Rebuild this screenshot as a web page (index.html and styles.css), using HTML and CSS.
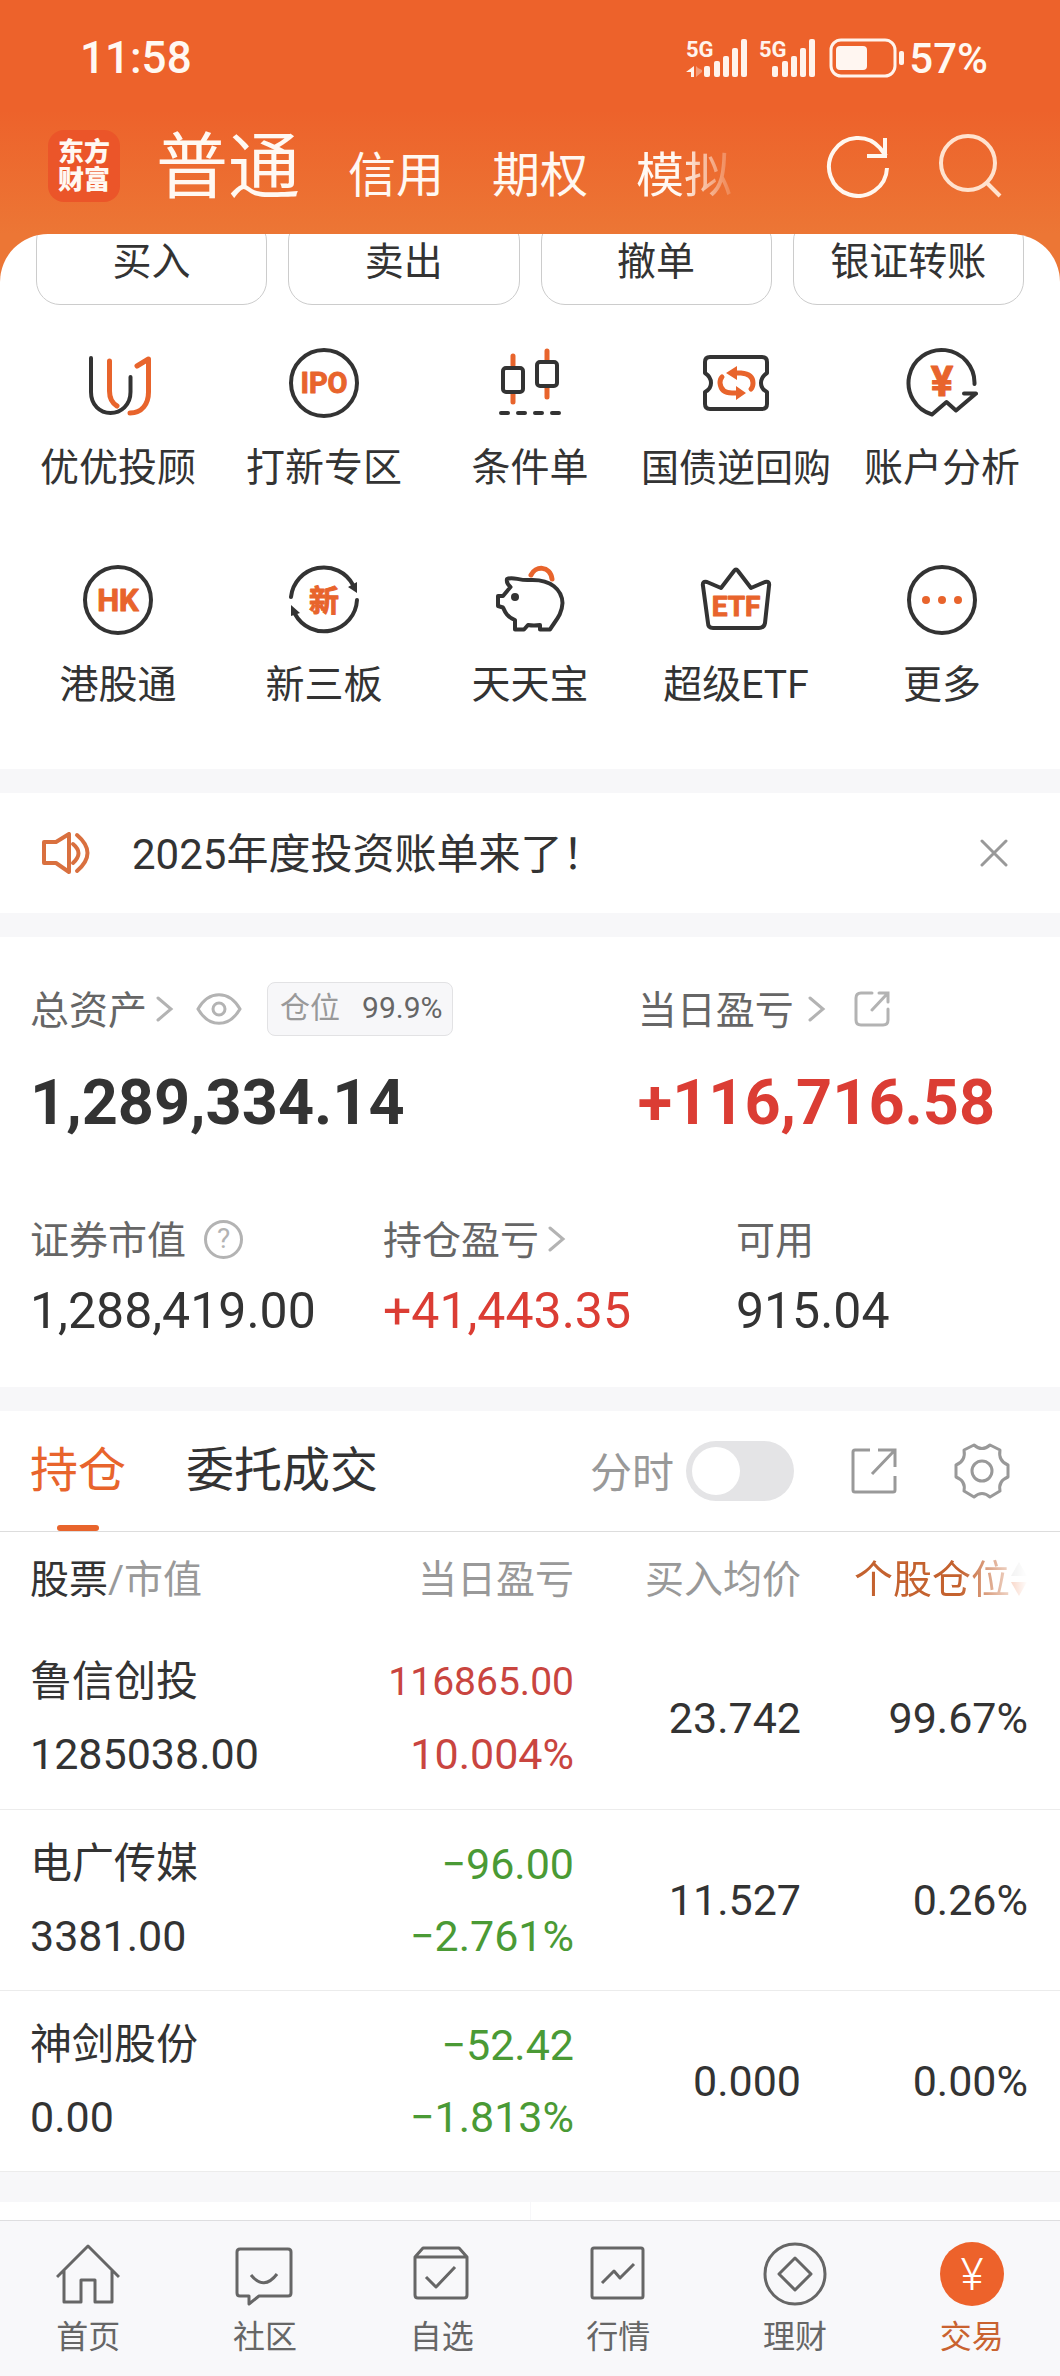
FILE: index.html
```html
<!DOCTYPE html>
<html lang="zh-CN">
<head>
    <meta charset="UTF-8">
    <meta name="viewport" content="width=device-width, initial-scale=1.0">
    <title>交易</title>
    <link rel="stylesheet" href="styles.css">
</head>
<body>
    <!-- 顶部 -->
    <header class="header">
        <div class="status">
            <span class="time">11:58</span>
            <div class="status-right">
                <svg class="signal" viewBox="0 0 64 40">
                    <text x="0" y="19" class="net">5G</text>
                    <g fill="#fff3ec">
                        <path d="M8 28v11H5v-5H0z"/>
                        <path d="M10 28v11l6-5v-2l-4-2z" opacity=".4"/>
                        <rect x="18" y="28" width="6" height="11" rx="2"/>
                        <rect x="28" y="23" width="6" height="16" rx="2"/>
                        <rect x="37" y="18" width="6" height="21" rx="2"/>
                        <rect x="46" y="10" width="6" height="29" rx="2"/>
                        <rect x="55" y="1" width="6" height="38" rx="2"/>
                    </g>
                </svg>
                <svg class="signal second" viewBox="0 0 64 40">
                    <text x="0" y="19" class="net">5G</text>
                    <g fill="#fff3ec">
                        <rect x="13" y="28" width="6" height="11" rx="2"/>
                        <rect x="23" y="23" width="6" height="16" rx="2"/>
                        <rect x="32" y="18" width="6" height="21" rx="2"/>
                        <rect x="41" y="10" width="6" height="29" rx="2"/>
                        <rect x="50" y="1" width="6" height="38" rx="2"/>
                    </g>
                </svg>
                <svg class="battery" viewBox="0 0 76 40">
                    <rect x="2" y="2" width="64" height="36" rx="10" fill="none" stroke="#fff3ec" stroke-width="3"/>
                    <rect x="7" y="8" width="31" height="24" rx="4" fill="#fff6f1"/>
                    <rect x="70" y="13" width="5" height="14" rx="2" fill="#fff3ec"/>
                </svg>
                <span class="percent">57%</span>
            </div>
        </div>
        <div class="topbar">
            <a class="logo" href="#">东方<br>财富</a>
            <nav class="account">
                <a class="current" href="#">普通</a>
                <a href="#">信用</a>
                <a href="#">期权</a>
                <a class="fade" href="#">模拟</a>
            </nav>
            <div class="actions">
                <button type="button" aria-label="刷新">
                    <svg viewBox="0 0 64 64" fill="none" stroke="#fff7ef" stroke-width="4">
                        <path d="M61 34A29 29 0 1 1 54 14L60 22"/>
                        <path d="M59 4v18H41"/>
                    </svg>
                </button>
                <button type="button" aria-label="搜索">
                    <svg viewBox="0 0 64 64" fill="none" stroke="#ffe2ce" stroke-width="4">
                        <circle cx="30" cy="29" r="27"/>
                        <path d="M48 48l14 14"/>
                    </svg>
                </button>
            </div>
        </div>
    </header>

    <main>
        <!-- 快捷入口 -->
        <section class="sheet">
            <div class="trade">
                <button type="button">买入</button>
                <button type="button">卖出</button>
                <button type="button">撤单</button>
                <button type="button">银证转账</button>
            </div>
            <div class="features">
                <a href="#">
                    <svg class="icon" viewBox="0 0 72 72">
                        <path d="M9 11V45C9 58 18 66 28.500 66S48.500 58 48.500 45V30"/>
                        <path class="hot" d="M27.500 14V44C27.500 51 30 56 35 59M48 66C60 66 66.500 57 66.500 45V12L55 19"/>
                    </svg>
                    <span>优优投顾</span>
                </a>
                <a href="#">
                    <svg class="icon" viewBox="0 0 72 72">
                        <circle cx="36" cy="36" r="33"/>
                        <text x="36" y="46" font-size="29">IPO</text>
                    </svg>
                    <span>打新专区</span>
                </a>
                <a href="#">
                    <svg class="icon" viewBox="0 0 72 72">
                        <path class="hot" d="M19 9v9M19 46v9M53 4v9M53 41v9"/>
                        <rect x="9" y="21" width="20" height="24" rx="3"/>
                        <rect x="43" y="15" width="20" height="24" rx="3"/>
                        <path d="M7 66h7M24 66h7M41 66h7M58 66h7"/>
                    </svg>
                    <span>条件单</span>
                </a>
                <a href="#">
                    <svg class="icon" viewBox="0 0 72 72">
                        <path d="M5 26V15Q5 10 10 10H62Q67 10 67 15V26Q61 30 61 36T67 45V57Q67 62 62 62H10Q5 62 5 57V45Q11 42 11 36T5 26Z"/>
                        <path class="hot" d="M35 26H41Q53 27 53 36Q53 40 51 42M22 30Q20 32 20 36Q21 46 32 46H37"/>
                        <path class="fill" d="M26 26l11-7v14zM46 46l-10-7v14z"/>
                    </svg>
                    <span class="long">国债逆回购</span>
                </a>
                <a href="#">
                    <svg class="icon" viewBox="0 0 72 72">
                        <path d="M68.500 37A33 33 0 1 0 26 67.500L40.500 55L50 63.500L70 46.500H58"/>
                        <text x="36" y="49" font-size="42">¥</text>
                    </svg>
                    <span>账户分析</span>
                </a>
                <a href="#">
                    <svg class="icon" viewBox="0 0 72 72">
                        <circle cx="36" cy="36" r="33"/>
                        <text x="36" y="47" font-size="31">HK</text>
                    </svg>
                    <span>港股通</span>
                </a>
                <a href="#">
                    <svg class="icon" viewBox="0 0 72 72">
                        <path d="M3 33A33 33 0 0 1 65 21M69 36A33 33 0 0 1 7 50"/>
                        <path class="dark" d="M69 18v11l-9-6zM3 41l9 8-9 3z"/>
                        <text x="36" y="47" font-size="30">新</text>
                    </svg>
                    <span>新三板</span>
                </a>
                <a href="#">
                    <svg class="icon" viewBox="0 0 72 72">
                        <path class="hot" d="M37 11C41 2 56 1 58 15"/>
                        <path d="M13 15C19 12 25 17 36 16C57 15 68 26 68.500 39C68 51 61 57 56 65.500H46V61Q40 62 34 61L30 65.500H21V56C13 53 11 48 9 43.500L4 42V32H9L16.500 23Q12 19 13 15Z"/>
                        <circle class="dark" cx="21" cy="33" r="4"/>
                    </svg>
                    <span>天天宝</span>
                </a>
                <a href="#">
                    <svg class="icon" viewBox="0 0 72 72">
                        <path d="M3 22Q2 17 7 18L21 24L34 7Q36 4 38 7L51 24L65 18Q70 17 69 22L65 59Q64 64 59 64H13Q8 64 8 59Z"/>
                        <text x="36" y="52" font-size="28">ETF</text>
                    </svg>
                    <span>超级ETF</span>
                </a>
                <a href="#">
                    <svg class="icon" viewBox="0 0 72 72">
                        <circle cx="36" cy="36" r="33"/>
                        <circle class="fill" cx="20" cy="36" r="4"/>
                        <circle class="fill" cx="36" cy="36" r="4"/>
                        <circle class="fill" cx="52" cy="36" r="4"/>
                    </svg>
                    <span>更多</span>
                </a>
            </div>
        </section>

        <!-- 公告 -->
        <section class="notice">
            <svg class="speaker" viewBox="0 0 48 42" fill="none" stroke="#d9703f" stroke-width="4" stroke-linejoin="round" stroke-linecap="round">
                <path d="M2 10h12l13-8v38l-13-9H2z"/>
                <path d="M31 12q11 9 0 19M35 3q21 18 0 36"/>
            </svg>
            <a href="#">2025年度投资账单来了！</a>
            <button type="button" aria-label="关闭">
                <svg viewBox="0 0 28 28" stroke="#999" stroke-width="3" stroke-linecap="round">
                    <path d="M2 2l24 24M26 2L2 26"/>
                </svg>
            </button>
        </section>

        <!-- 资产 -->
        <section class="assets">
            <div class="total">
                <div>
                    <div class="label">
                        <a href="#">总资产</a>
                        <svg class="arrow" viewBox="0 0 18 26"><path d="M2 2l13 11L2 24"/></svg>
                        <button class="eye" type="button" aria-label="隐藏金额">
                            <svg viewBox="0 0 46 32" fill="none" stroke="#b3b3b3" stroke-width="3">
                                <path d="M2 16C13-3 33-3 44 16C33 35 13 35 2 16Z"/>
                                <circle cx="23" cy="16" r="6"/>
                            </svg>
                        </button>
                        <span class="badge">仓位<b>99.9%</b></span>
                    </div>
                    <div class="money">1,289,334.14</div>
                </div>
                <div>
                    <div class="label">
                        <a href="#">当日盈亏</a>
                        <svg class="arrow day" viewBox="0 0 18 26"><path d="M2 2l13 11L2 24"/></svg>
                        <button class="share" type="button" aria-label="分享盈亏">
                            <svg viewBox="0 0 36 36" fill="none" stroke="#b3b3b3" stroke-width="3" stroke-linecap="round">
                                <path d="M18 2H7Q2 2 2 7V29Q2 34 7 34H29Q34 34 34 29V18M25 2H34V11M33 3L18 19"/>
                            </svg>
                        </button>
                    </div>
                    <div class="money up">+116,716.58</div>
                </div>
            </div>
            <div class="detail">
                <div>
                    <div class="label">
                        <span>证券市值</span>
                        <button class="help" type="button" aria-label="说明">?</button>
                    </div>
                    <div class="num">1,288,419.00</div>
                </div>
                <div>
                    <div class="label">
                        <a href="#">持仓盈亏</a>
                        <svg class="arrow" viewBox="0 0 18 26"><path d="M2 2l13 11L2 24"/></svg>
                    </div>
                    <div class="num up">+41,443.35</div>
                </div>
                <div>
                    <div class="label"><span>可用</span></div>
                    <div class="num">915.04</div>
                </div>
            </div>
        </section>

        <!-- 持仓 -->
        <section class="position">
            <div class="tabs">
                <a class="current" href="#">持仓</a>
                <a href="#">委托成交</a>
                <label class="switch"><span>分时</span><input type="checkbox"></label>
                <button type="button" aria-label="分享持仓">
                    <svg viewBox="0 0 48 48" fill="none" stroke="#999" stroke-width="3">
                        <path d="M20 3H5Q3 3 3 5V43Q3 45 5 45H43Q45 45 45 43V29M28 3H45V20M44 4L22 27"/>
                    </svg>
                </button>
                <button type="button" aria-label="设置">
                    <svg viewBox="0 0 56 56" fill="none" stroke="#999" stroke-width="3" stroke-linejoin="round">
                        <path d="M20 2Q28 9 36 2L46 7Q44 18 54 22V34Q44 38 46 48L36 54Q28 47 20 54L10 48Q12 38 2 34V22Q12 18 10 7Z"/>
                        <circle cx="28" cy="28" r="10"/>
                    </svg>
                </button>
            </div>
            <table>
                <thead>
                    <tr>
                        <th><em>股票</em>/市值</th>
                        <th>当日盈亏</th>
                        <th>买入均价</th>
                        <th class="sort">
                            <span>个股仓位<svg viewBox="0 0 18 36"><path d="M9 0l8 14H1z" fill="#ccc"/><path d="M9 34l8-14H1z" fill="#e8642c"/></svg></span>
                        </th>
                    </tr>
                </thead>
                <tbody>
                    <tr>
                        <td><span class="name">鲁信创投</span><span>1285038.00</span></td>
                        <td class="red"><span class="small">116865.00</span><span>10.004%</span></td>
                        <td>23.742</td>
                        <td>99.67%</td>
                    </tr>
                    <tr>
                        <td><span class="name">电广传媒</span><span>3381.00</span></td>
                        <td class="green"><span>−96.00</span><span>−2.761%</span></td>
                        <td>11.527</td>
                        <td>0.26%</td>
                    </tr>
                    <tr>
                        <td><span class="name">神剑股份</span><span>0.00</span></td>
                        <td class="green"><span>−52.42</span><span>−1.813%</span></td>
                        <td>0.000</td>
                        <td>0.00%</td>
                    </tr>
                </tbody>
            </table>
        </section>
        <div class="next"><div></div><div></div></div>
    </main>

    <!-- 底部导航 -->
    <nav class="tabbar">
        <a href="#">
            <svg viewBox="0 0 64 64"><path d="M1 35L32 4L63 35M8 28V60H25V38H39V60H56V28"/></svg>
            首页
        </a>
        <a href="#">
            <svg viewBox="0 0 64 64"><path d="M7 7H55Q58 7 58 10V51Q58 54 55 54H26L16 62V54H7Q4 54 4 51V10Q4 7 7 7ZM18 33Q31 49 44 32"/></svg>
            社区
        </a>
        <a href="#">
            <svg viewBox="0 0 64 64"><path d="M5 15L13 6H49L57 15V53Q57 56 54 56H8Q5 56 5 53ZM5 15H57M16 35L26 45L45 25"/></svg>
            自选
        </a>
        <a href="#">
            <svg viewBox="0 0 64 64"><rect x="6" y="6" width="51" height="50" rx="2"/><path d="M16 41L28 29L34 36L48 22"/></svg>
            行情
        </a>
        <a href="#">
            <svg viewBox="0 0 64 64"><circle cx="32" cy="32" r="30"/><path d="M32 16L48 32L32 48L16 32Z"/></svg>
            理财
        </a>
        <a class="current" href="#">
            <svg viewBox="0 0 64 64"><circle cx="32" cy="32" r="32"/><text x="32" y="48">¥</text></svg>
            交易
        </a>
    </nav>
</body>
</html>
```
FILE: styles.css
```css
* {
    margin: 0;
    padding: 0;
    box-sizing: border-box;
}
body {
    min-height: 100vh;
    display: flex;
    flex-direction: column;
    background-color: #f7f7f9;
    color: #333;
    font-family: Roboto, "Noto Sans CJK SC", sans-serif;
    font-size: 39px;
}
a {
    color: inherit;
    text-decoration: none;
}
button {
    border: none;
    background: none;
    color: inherit;
    font: inherit;
    cursor: pointer;
}
svg {
    display: block;
    flex-shrink: 0;
}
main {
    flex: 1;
    display: flex;
    flex-direction: column;
    gap: 24px;
}

/* 顶部 */
.header {
    height: 284px;
    margin-bottom: -50px;
    background: linear-gradient(#ed622b 110px, #ec7635 234px);
    color: #fff8f2;
}
.status {
    display: flex;
    justify-content: space-between;
    align-items: center;
    height: 116px;
    padding: 0 72px 0 80px;
    font-size: 44px;
    font-weight: 500;
}
.status-right {
    display: flex;
    align-items: center;
}
.signal {
    width: 64px;
    height: 40px;
    margin-right: 9px;
}
.signal.second {
    margin-right: 6px;
}
.net {
    fill: #fff3ec;
    font-size: 22px;
    font-weight: 700;
}
.battery {
    width: 76px;
    height: 40px;
    margin-right: 4px;
}
.percent {
    font-size: 42px;
}
.topbar {
    display: flex;
    align-items: center;
    height: 100px;
    padding: 0 58px 0 48px;
}
.logo {
    width: 72px;
    height: 72px;
    padding: 8px 0;
    border-radius: 16px;
    background-color: #eb5529;
    font-size: 26px;
    font-weight: 900;
    line-height: 28px;
    text-align: center;
}
.account {
    display: flex;
    align-items: baseline;
    gap: 48px;
    margin-left: 36px;
    padding-top: 12px;
    font-size: 48px;
    line-height: 72px;
}
.account .current {
    font-size: 72px;
}
.account .fade {
    -webkit-mask-image: linear-gradient(to right, #000 45%, transparent 110%);
    mask-image: linear-gradient(to right, #000 45%, transparent 110%);
}
.actions {
    display: flex;
    gap: 48px;
    margin-left: auto;
}
.actions svg {
    width: 64px;
    height: 64px;
}

/* 快捷入口 */
.sheet {
    overflow: hidden;
    border-radius: 48px 48px 0 0;
    background-color: #fff;
}
.trade {
    display: grid;
    grid-template-columns: repeat(4, 1fr);
    gap: 21px;
    margin-top: -17px;
    padding: 0 36px;
}
.trade button {
    height: 88px;
    padding-bottom: 6px;
    border: 1px solid #ccc;
    border-radius: 24px;
}
.features {
    display: grid;
    grid-template-columns: repeat(5, 1fr);
    row-gap: 68px;
    padding: 42px 15px 56px;
}
.features a {
    display: flex;
    flex-direction: column;
    align-items: center;
    gap: 21px;
    line-height: 56px;
    white-space: nowrap;
}
.features .long {
    font-size: 38px;
}
.icon {
    width: 72px;
    height: 72px;
    fill: none;
    stroke: #333;
    stroke-width: 4;
    stroke-linecap: round;
    stroke-linejoin: round;
}
.icon .hot {
    stroke: #e8642c;
    stroke-width: 5;
}
.icon .fill {
    fill: #e8642c;
    stroke: none;
}
.icon .dark {
    fill: #333;
    stroke: none;
}
.icon text {
    fill: #e8642c;
    stroke: #e8642c;
    stroke-width: 1;
    font-weight: 700;
    text-anchor: middle;
}

/* 公告 */
.notice {
    display: flex;
    align-items: center;
    height: 120px;
    padding: 0 52px 0 42px;
    background-color: #fff;
    font-size: 42px;
}
.notice a {
    flex: 1;
    margin-left: 42px;
    padding-bottom: 6px;
}
.speaker {
    width: 48px;
    height: 42px;
}
.notice button svg {
    width: 28px;
    height: 28px;
}

/* 资产 */
.assets {
    padding: 44px 30px 48px;
    background-color: #fff;
}
.total {
    display: grid;
    grid-template-columns: 31fr 20fr;
    margin-bottom: 72px;
}
.detail {
    display: grid;
    grid-template-columns: 6fr 6fr 5fr;
}
.label {
    display: flex;
    align-items: center;
    height: 56px;
    color: #666;
}
.label > a,
.label > span {
    padding-bottom: 4px;
}
.arrow {
    width: 18px;
    height: 26px;
    margin-left: 9px;
    fill: none;
    stroke: #b3b3b3;
    stroke-width: 3;
    stroke-linecap: round;
}
.arrow.day {
    margin-left: 14px;
}
.eye {
    width: 46px;
    margin: 0 25px 0 22px;
}
.share {
    width: 36px;
    margin-left: 28px;
}
.help {
    width: 39px;
    height: 39px;
    margin-left: 18px;
    border: 3px solid #b3b3b3;
    border-radius: 50%;
    color: #b3b3b3;
    font-size: 28px;
    line-height: 32px;
}
.label .badge {
    height: 54px;
    padding: 0 10px 0 12px;
    border: 1px solid #e2e2e4;
    border-radius: 8px;
    background-color: #f7f7f9;
    color: #999;
    font-size: 30px;
    line-height: 50px;
}
.badge b {
    margin-left: 22px;
    color: #666;
    font-weight: 400;
}
.money {
    margin-top: 30px;
    font-size: 63px;
    font-weight: 700;
    line-height: 72px;
}
.num {
    margin-top: 16px;
    font-size: 50px;
    line-height: 56px;
}
.up {
    color: #db3d34;
}

/* 持仓 */
.position {
    background-color: #fff;
}
.tabs {
    display: flex;
    align-items: center;
    height: 121px;
    padding: 0 50px 0 30px;
    border-bottom: 1px solid #ddd;
    font-size: 48px;
}
.tabs a {
    position: relative;
    margin-right: 60px;
    line-height: 120px;
}
.tabs .current {
    color: #e8642c;
}
.tabs .current::after {
    content: "";
    position: absolute;
    left: 50%;
    bottom: 0;
    width: 42px;
    height: 6px;
    margin-left: -21px;
    border-radius: 3px;
    background-color: #e8642c;
}
.switch {
    display: flex;
    align-items: center;
    gap: 12px;
    margin-left: auto;
    color: #999;
    font-size: 42px;
}
.switch span {
    padding-bottom: 4px;
}
.switch input {
    appearance: none;
    width: 108px;
    height: 60px;
    padding: 6px;
    border-radius: 30px;
    background-color: #e4e4e6;
}
.switch input::before {
    content: "";
    display: block;
    width: 48px;
    height: 48px;
    border-radius: 50%;
    background-color: #fff;
}
.switch input:checked {
    background-color: #e8642c;
}
.switch input:checked::before {
    margin-left: auto;
}
.tabs button {
    width: 56px;
    margin-left: 56px;
}
.tabs .switch + button {
    width: 48px;
}
table {
    width: 100%;
    table-layout: fixed;
    border-collapse: collapse;
    font-size: 43px;
    line-height: 72px;
}
th {
    width: 227px;
    height: 96px;
    color: #999;
    font-size: 39px;
    font-weight: 400;
    text-align: right;
}
th:first-child {
    width: auto;
}
th em {
    color: #333;
    font-style: normal;
}
td {
    height: 181px;
    border-bottom: 1px solid #ececec;
    text-align: right;
}
th:first-child,
td:first-child {
    padding-left: 30px;
    text-align: left;
}
th:last-child,
td:last-child {
    width: 259px;
    padding-right: 32px;
}
td span {
    display: block;
}
td .name {
    font-size: 42px;
}
td .small {
    font-size: 39px;
}
.red {
    color: #c9453f;
}
.green {
    color: #4a9a35;
}
.sort span {
    display: flex;
    justify-content: flex-end;
    align-items: center;
    color: #c4622f;
    -webkit-mask-image: linear-gradient(to right, #000 70%, transparent);
    mask-image: linear-gradient(to right, #000 70%, transparent);
}
.sort svg {
    width: 18px;
    height: 36px;
}
.next {
    display: flex;
    gap: 1px;
    margin-top: 6px;
}
.next div {
    flex: 1;
    height: 18px;
    background-color: #fff;
}

/* 底部导航 */
.tabbar {
    position: sticky;
    bottom: 0;
    display: grid;
    grid-template-columns: repeat(6, 1fr);
    padding: 21px 0 20px;
    border-top: 1px solid #dedee0;
    background-color: #f8f8fa;
    color: #666;
    font-size: 32px;
    line-height: 40px;
}
.tabbar a {
    display: flex;
    flex-direction: column;
    align-items: center;
    gap: 11px;
}
.tabbar svg {
    width: 64px;
    height: 64px;
    fill: none;
    stroke: #666;
    stroke-width: 3;
    stroke-linejoin: round;
}
.tabbar .current {
    color: #c9622f;
}
.tabbar .current svg {
    fill: #ed622b;
    stroke: none;
}
.tabbar text {
    fill: #fff;
    font-size: 44px;
    font-weight: 300;
    text-anchor: middle;
}
```
